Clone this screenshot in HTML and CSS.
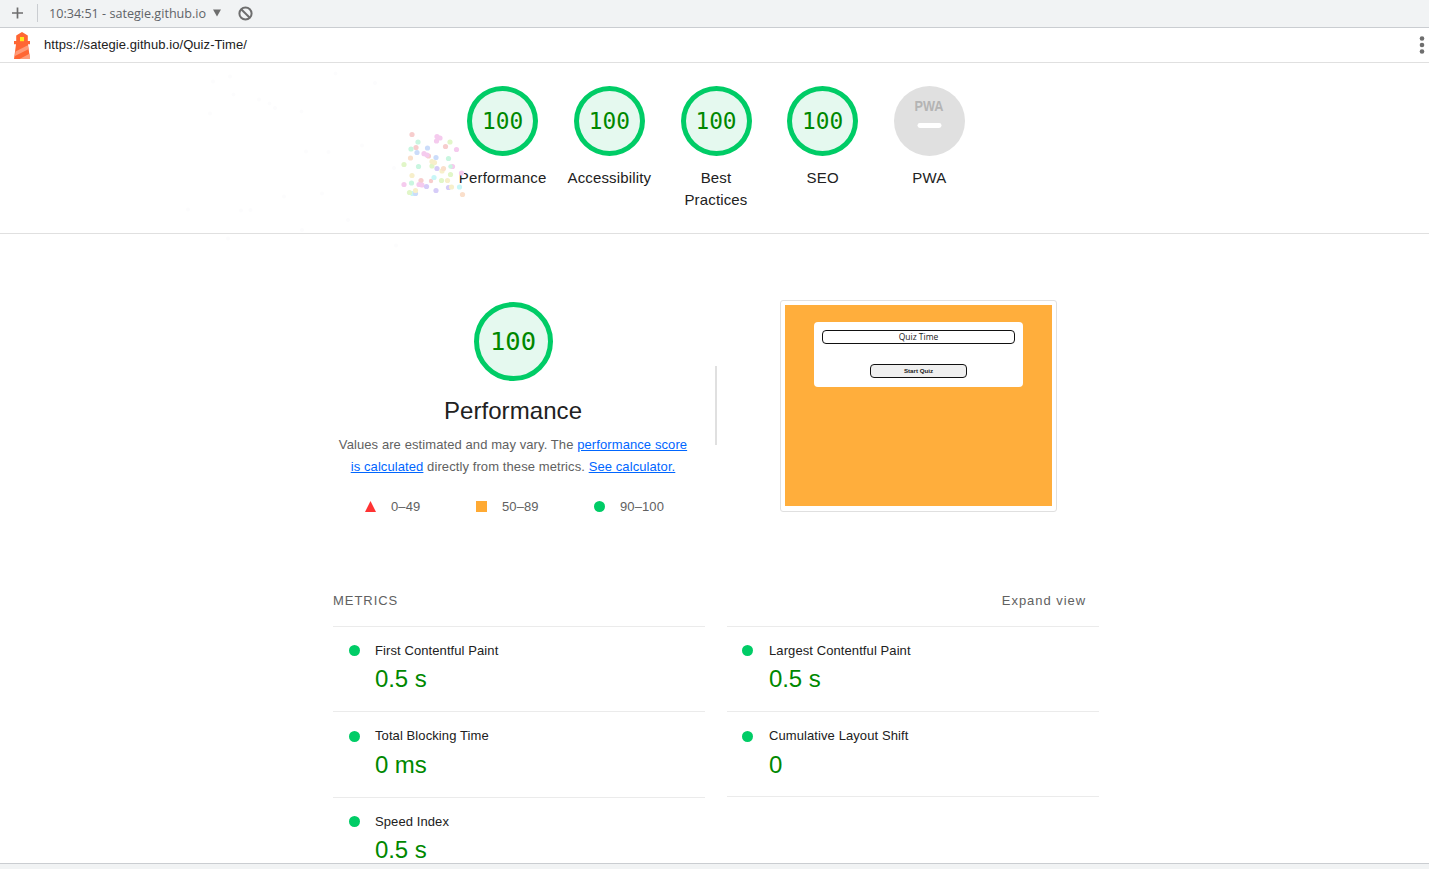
FILE: index.html
```html
<!DOCTYPE html>
<html lang="en">
<head>
<meta charset="utf-8">
<title>Lighthouse Report</title>
<link rel="stylesheet" href="styles.css">
</head>
<body>
<div class="toolbar">
  <svg class="plus" width="12" height="12" viewBox="0 0 12 12"><path d="M5.500 .5v11M0 6h11" stroke="#6e6e6e" stroke-width="1.700"/></svg>
  <span class="divider"></span>
  <span class="session">10:34:51 - sategie.github.io</span>
  <svg class="caret" width="8" height="8" viewBox="0 0 8 8"><path d="M0 .5h8L4 7.5z" fill="#6e6e6e"/></svg>
  <svg width="15" height="15" viewBox="0 0 15 15"><circle cx="7.5" cy="7.5" r="6.1" fill="none" stroke="#6e6e6e" stroke-width="2"/><path d="M3.2 3.2l8.6 8.6" stroke="#6e6e6e" stroke-width="2"/></svg>
</div>
<div class="urlbar">
  <svg width="18" height="28" viewBox="0 0 18 28">
    <path d="M3.200 4.500L9 1l5.800 3.500V10H17v3.300h-2L17 28H1l2-14.700H1V10h2.200z" fill="#ff6633"/>
    <path d="M2.500 20.500L14.800 14.300l.6 3.900L1.900 25zM6.500 28l9.900-5.200L17 26.500V28z" fill="#ff9b78"/>
    <path d="M7 6h4v4.200H7z" fill="#ffe81a"/>
  </svg>
  <span class="url">https://sategie.github.io/Quiz-Time/</span>
  <svg class="dots" width="6" height="20" viewBox="0 0 6 20" fill="#6e6e6e"><circle cx="3" cy="3.5" r="2.3"/><circle cx="3" cy="10" r="2.3"/><circle cx="3" cy="16.5" r="2.3"/></svg>
</div>
<div class="report">
  <div class="scores">
    <div class="score"><div class="gauge">100</div><div class="label">Performance</div></div>
    <div class="score"><div class="gauge">100</div><div class="label">Accessibility</div></div>
    <div class="score"><div class="gauge">100</div><div class="label">Best Practices</div></div>
    <div class="score"><div class="gauge">100</div><div class="label">SEO</div></div>
    <div class="score">
      <svg width="71" height="70" viewBox="0 0 71 70"><ellipse cx="35.5" cy="35" rx="35.5" ry="35" fill="#e0e0e0"/><text class="pwa" x="20.500" y="24.800" textLength="29" lengthAdjust="spacingAndGlyphs">PWA</text><rect x="23.5" y="37" width="24" height="5" rx="2.4" fill="#fff"/></svg>
      <div class="label">PWA</div>
    </div>
  </div>
  <div class="category">
    <div class="summary">
      <div class="gauge big">100</div>
      <h1 class="title">Performance</h1>
      <div class="description">Values are estimated and may vary. The <a class="link">performance score</a><br><a class="link">is calculated</a> directly from these metrics. <a class="link">See calculator.</a></div>
      <div class="scale">
        <svg width="11" height="11" viewBox="0 0 11 11"><path d="M5.5 0L11 11H0z" fill="#f33"/></svg><span class="r1">0–49</span>
        <svg width="11" height="11" viewBox="0 0 11 11"><path d="M0 0h11v11H0z" fill="#fa3"/></svg><span class="r2">50–89</span>
        <svg width="11" height="11" viewBox="0 0 11 11"><circle cx="5.5" cy="5.5" r="5.5" fill="#0c6"/></svg><span>90–100</span>
      </div>
    </div>
    <div class="separator"></div>
    <div class="preview"><div class="screen"><div class="quiz"><div class="quiz-title">Quiz Time</div><div class="quiz-start">Start Quiz</div></div></div></div>
  </div>
  <div class="metrics">
    <div class="metrics-head"><span>METRICS</span><span class="expand">Expand view</span></div>
    <div class="columns">
      <div class="column">
        <div class="metric"><i class="dot"></i><div><div class="name">First Contentful Paint</div><div class="value">0.5 s</div></div></div>
        <div class="metric tall"><i class="dot"></i><div><div class="name">Total Blocking Time</div><div class="value">0 ms</div></div></div>
        <div class="metric"><i class="dot"></i><div><div class="name">Speed Index</div><div class="value">0.5 s</div></div></div>
      </div>
      <div class="column right">
        <div class="metric"><i class="dot"></i><div><div class="name">Largest Contentful Paint</div><div class="value">0.5 s</div></div></div>
        <div class="metric tall last"><i class="dot"></i><div><div class="name">Cumulative Layout Shift</div><div class="value">0</div></div></div>
      </div>
    </div>
  </div>
  <svg class="confetti" width="320" height="200" viewBox="170 60 320 200">
    <g fill="#f7cdcd"><circle cx="412" cy="134.5" r="2.6"/><circle cx="416" cy="147.500" r="2.6"/><circle cx="445.500" cy="146.500" r="2.6"/><circle cx="428.500" cy="156" r="2.6"/><circle cx="421" cy="180.500" r="2.6"/><circle cx="431" cy="181" r="2.200"/></g>
    <g fill="#f5cbee"><circle cx="437" cy="136.500" r="2.6"/><circle cx="440" cy="138" r="2.6"/><circle cx="436.500" cy="141" r="2.6"/><circle cx="456.500" cy="149.500" r="2.6"/><circle cx="424" cy="153.700" r="2.6"/><circle cx="427" cy="155" r="2.6"/><circle cx="452.500" cy="166.500" r="2.6"/><circle cx="404" cy="184.500" r="2.6"/><circle cx="419" cy="184.500" r="2.6"/><circle cx="422" cy="185" r="2.6"/><circle cx="461.500" cy="173" r="2.6"/></g>
    <g fill="#c9f6e0"><circle cx="418" cy="142" r="2.6"/><circle cx="411" cy="149" r="2.6"/><circle cx="448.500" cy="158.500" r="2.6"/><circle cx="418.500" cy="166.500" r="2.6"/><circle cx="450.500" cy="166.500" r="2.200"/><circle cx="411.500" cy="183" r="2.6"/></g>
    <g fill="#c8f6f7"><circle cx="434" cy="177.500" r="2.6"/><circle cx="459.500" cy="187" r="2.6"/><circle cx="412.500" cy="193.500" r="2.6"/></g>
    <g fill="#cbdcfa"><circle cx="417" cy="152.500" r="2.6"/><circle cx="427.500" cy="148" r="2.6"/><circle cx="436" cy="157.500" r="2.6"/><circle cx="415.500" cy="193.500" r="2.6"/></g>
    <g fill="#d6ccf8"><circle cx="437" cy="168.500" r="2.6"/><circle cx="426.500" cy="186.500" r="2.6"/><circle cx="436" cy="190.500" r="2.6"/><circle cx="448.500" cy="187.500" r="2.6"/></g>
    <g fill="#e1f6c8"><circle cx="450" cy="142" r="2.6"/><circle cx="404" cy="164.500" r="2.6"/><circle cx="432" cy="166" r="2.6"/><circle cx="450.500" cy="174.500" r="2.6"/><circle cx="441.500" cy="180.500" r="2.6"/><circle cx="409.500" cy="192.500" r="2.6"/></g>
    <g fill="#f7efcb"><circle cx="432" cy="161.500" r="2.6"/><circle cx="434.500" cy="162.500" r="2.6"/><circle cx="412" cy="175.500" r="2.6"/><circle cx="442" cy="171" r="2.6"/><circle cx="447.500" cy="180.500" r="2.6"/><circle cx="415.500" cy="190.500" r="2.6"/><circle cx="451.500" cy="187" r="2.6"/></g>
    <g fill="#fadfcb"><circle cx="410.500" cy="158" r="2.6"/><circle cx="443.500" cy="168.500" r="2.6"/><circle cx="462.500" cy="194.500" r="2.6"/></g>
    <path d="M230 76.500h0M213 81.500h0M335.500 73.500h0M375 83h0M233.500 94.500h0M259 99.500h0M269.500 103.500h0M275 108h0M210 113.500h0M301.500 111.500h0M306 151.500h0M328.500 152h0M362 145.500h0M394 168h0M188 209.500h0M241 210.500h0M250.500 210h0M284 196.500h0M322 193.500h0M348 220h0M302 230h0M228 238.500h0M396 245.500h0" stroke="#fcfcfd" stroke-width="4" stroke-linecap="round"/>
  </svg>
</div>
<div class="drawer"></div>
</body>
</html>
```
FILE: styles.css
```css
* { box-sizing: border-box; }
body { margin: 0; height: 869px; overflow: hidden; display: flex; flex-direction: column; background: #fff; color: #212121; font: 13px/22px "Liberation Sans", Arial, sans-serif; }
svg { display: block; flex: none; }
.toolbar { height: 28px; flex: none; display: flex; align-items: center; padding: 0 0 1px 12px; background: #f1f3f4; border-bottom: 1px solid #cacdd1; font-family: "Open Sans", sans-serif; color: #5f6368; }
.divider { width: 1px; height: 18px; background: #cacdd1; margin: 0 11px 0 13px; }
.session { width: 158px; padding-top: 1px; font-size: 12.6px; white-space: nowrap; }
.caret { margin: 0 17px 0 6px; }
.urlbar { height: 35px; flex: none; display: flex; align-items: center; padding: 0 4px 0 13px; border-bottom: 1px solid #e0e0e0; font-size: 13px; }
.url { margin-left: 13px; letter-spacing: .07px; }
.dots { margin-left: auto; }
.report { flex: 1; min-height: 0; overflow: hidden; }
.scores { height: 171px; padding: 23px 0 0 3px; display: flex; justify-content: center; border-bottom: 1px solid #e0e0e0; }
.score { width: 106.7px; display: flex; flex-direction: column; align-items: center; }
.gauge { width: 71px; height: 70px; flex: none; border: 5px solid #0c6; border-radius: 50%; background: #e5f9ef; color: #080; display: flex; align-items: center; justify-content: center; padding-top: 1px; font: 22.8px/1 "DejaVu Sans Mono", monospace; }
.pwa { fill: #b4b4b4; font: bold 14.5px "Liberation Sans", sans-serif; }
.label { width: 90px; margin-top: 11px; text-align: center; font-size: 15px; letter-spacing: .15px; }
.category { height: 342px; width: 766px; margin: 0 0 0 333px; display: flex; }
.summary { width: 360px; padding-top: 68px; display: flex; flex-direction: column; align-items: center; }
.gauge.big { width: 79px; height: 79px; font-size: 25.500px; }
.title { margin: 14px 0 7px; font-size: 24px; line-height: 32px; font-weight: 400; letter-spacing: .07px; }
.description { white-space: nowrap; text-align: center; color: #616161; letter-spacing: .09px; }
.link { color: #06f; text-decoration: underline; }
.scale { width: 360px; height: 22px; margin-top: 18px; padding-left: 32px; display: flex; align-items: center; color: #616161; letter-spacing: .1px; }
.scale svg { margin-bottom: 1px; }
.scale span { margin-left: 15px; }
.scale .r1 { width: 85px; }
.scale .r2 { width: 92px; }
.separator { width: 2px; height: 79px; margin: 132px 63px 0 22px; background: #e0e0e0; }
.preview { width: 277px; height: 212px; margin-top: 66px; padding: 4px; border: 1px solid #e0e0e0; border-radius: 3px; }
.screen { height: 201px; padding: 16.5px 29px; background: #ffae3c; font-family: "Open Sans", sans-serif; color: #222; }
.quiz { height: 65px; padding: 8px 8px 0; background: #fff; border-radius: 4px; }
.quiz-title { height: 14px; border: 1px solid #111; border-radius: 4px; text-align: center; font-size: 8.500px; line-height: 12px; }
.quiz-start { width: 97px; height: 14px; margin: 20.500px auto 0; background: #efefef; border: 1px solid #111; border-radius: 4px; text-align: center; font: bold 6.2px/12px "Liberation Sans", sans-serif; }
.metrics { width: 766px; margin-left: 333px; }
.metrics-head { height: 50px; padding: 14px 13px 0 0; display: flex; justify-content: space-between; color: #616161; letter-spacing: .95px; }
.columns { display: flex; gap: 22px; }
.column { width: 372px; }
.metric { height: 85px; padding: 13px 0 0 16px; display: flex; border-top: 1px solid #ebebeb; }
.metric.tall { height: 86px; }
.metric.last { border-bottom: 1px solid #ebebeb; }
.dot { width: 11px; height: 11px; margin: 5px 15px 0 0; border-radius: 50%; background: #0c6; }
.tall .dot { margin-top: 6px; }
.right .dot { margin-left: -1px; margin-right: 16px; }
.name { letter-spacing: .09px; }
.value { color: #080; font-size: 24px; line-height: 34px; letter-spacing: -.1px; }
.tall .value { margin-top: 1px; }
.drawer { height: 6px; flex: none; background: #f1f3f4; border-top: 1px solid #cacdd1; }
.confetti { position: absolute; left: 170px; top: 60px; }
```
